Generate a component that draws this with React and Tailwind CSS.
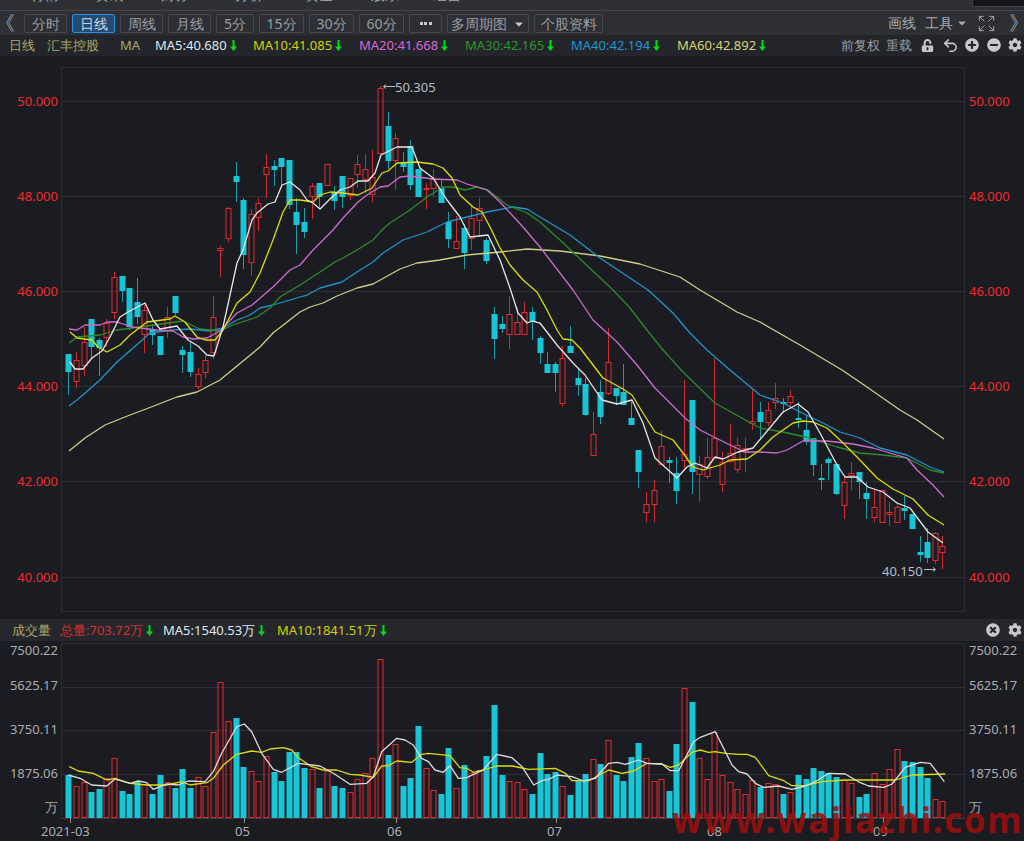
import React from "react";
import { Expand, Undo2 } from "lucide-react";
import { FaCog, FaUnlockAlt, FaPlusCircle, FaMinusCircle, FaTimesCircle, FaCaretDown } from "react-icons/fa";

// [highY, bodyTop, bodyBottom, lowY, isRed]
const C = [
[354,354,372,395,0],[352,360,381,388,1],[327,342,365,376,1],[319,319,347,358,0],[338,340,348,376,0],[319,323,337,347,1],
[272,277,312,319,1],[276,276,291,302,0],[288,288,327,330,0],[278,302,317,324,0],[305,310,334,353,1],[324,329,335,345,0],
[336,336,355,355,0],[307,317,330,338,1],[296,296,313,315,0],[346,350,355,373,0],[342,352,372,377,0],[368,374,386,389,1],
[355,360,372,378,1],[296,317,352,359,1],[246,248,250,277,1],[207,208,238,242,1],[162,176,182,202,0],[198,200,255,269,0],
[209,214,262,276,1],[198,203,217,231,1],[154,167,174,198,1],[160,166,170,186,0],[158,158,167,185,0],[160,160,205,209,0],
[198,212,225,254,0],[208,222,232,238,0],[183,186,196,219,1],[183,183,197,208,0],[164,164,185,185,1],[186,193,201,210,0],
[176,176,197,208,0],[178,178,195,200,1],[155,164,174,188,1],[154,169,179,193,1],[150,177,194,202,1],[86,88,153,153,1],
[112,126,161,169,0],[133,138,160,190,1],[152,162,167,172,0],[140,146,185,190,0],[169,169,197,197,0],[183,188,189,209,1],
[169,178,188,197,1],[179,188,203,203,0],[212,222,239,248,0],[216,241,248,248,1],[224,228,253,269,0],[206,218,238,250,1],
[198,208,220,237,1],[238,240,261,264,0],[307,314,339,359,0],[316,324,329,333,0],[296,314,334,349,1],[307,322,334,334,1],
[302,312,334,334,1],[307,312,322,340,0],[336,338,353,364,0],[352,364,373,373,0],[362,364,373,392,0],[346,358,403,407,1],
[326,346,353,353,0],[368,378,385,396,0],[378,384,415,416,0],[412,434,455,455,1],[380,392,417,424,0],[328,362,393,395,1],
[388,388,396,405,0],[364,392,405,405,0],[400,418,425,425,0],[450,450,472,488,0],[492,504,512,522,1],[480,490,504,522,1],
[431,446,464,464,1],[457,460,463,483,0],[457,473,491,504,0],[380,454,460,470,1],[400,400,472,494,0],[456,464,474,502,1],
[438,457,476,479,1],[358,438,458,458,1],[452,462,484,492,1],[424,453,461,463,1],[438,445,469,473,1],[438,448,452,472,1],
[388,421,423,430,1],[402,412,422,438,0],[402,410,422,426,1],[383,398,402,409,1],[398,402,404,413,0],[390,396,402,409,1],
[402,418,420,428,0],[415,430,441,445,0],[438,438,465,476,0],[464,478,480,490,0],[457,459,463,480,0],[464,464,494,495,0],
[477,482,505,519,1],[462,473,475,490,1],[472,472,482,499,0],[482,493,499,519,0],[488,507,517,522,1],[490,490,522,522,1],
[502,512,514,526,1],[503,507,522,522,1],[496,508,511,520,0],[514,514,529,529,0],[536,552,555,562,0],[528,542,558,563,0],
[532,533,560,564,1],[536,546,552,569,1],
];
const VT = [495,528,515,547,537,505,443,543,553,515,523,553,495,515,533,478,533,500,528,365,215,332,325,472,482,512,437,487,513,427,427,475,478,533,483,527,533,547,508,488,443,146,436,403,527,503,348,475,541,553,413,535,465,490,480,438,286,495,514,
515,538,553,430,492,485,528,556,513,492,447,462,391,495,513,440,400,443,512,508,543,403,233,276,443,508,365,495,515,538,553,510,530,520,523,553,547,495,508,475,482,490,500,510,520,560,553,488,523,478,417,452,455,472,505,567,573];

const MA5 = "70,362 75,369 83,369 92,358 102,351 110,337 120,317 128,312 145,303 153,320 160,329 177,326 188,340 198,346 207,355 214,356 223,327 237,263 243,250 252,220 257,213 268,204 275,202 282,185 290,182 300,190 307,200 313,203 320,209 330,199 340,190 350,187 358,181 368,181 375,173 381,155 397,147 412,147 420,168 433,178 447,200 460,217 470,237 488,235 500,260 510,288 518,313 527,323 533,321 540,323 557,345 573,363 585,375 602,400 617,404 632,400 643,423 655,458 677,478 687,467 695,463 707,468 715,457 723,459 738,452 753,448 768,430 783,412 798,404 808,412 820,433 837,465 845,477 857,477 868,487 883,492 897,503 910,508 928,532 943,543";
const MA10 = "70,332 77,338 92,340 98,347 107,352 120,345 130,335 147,322 170,319 175,316 185,322 197,337 205,340 215,340 223,330 237,303 250,292 260,273 273,240 283,212 290,200 300,200 313,202 320,195 330,192 343,193 358,195 372,188 382,173 388,171 397,163 417,162 433,164 443,168 452,178 460,195 473,207 482,212 490,227 500,248 510,265 523,280 537,292 547,310 557,330 563,339 572,340 580,348 603,378 623,389 632,395 643,413 655,432 673,440 683,453 693,467 703,470 720,465 730,460 747,459 760,450 773,437 793,423 803,421 813,422 827,428 840,440 858,458 877,478 893,489 913,499 928,515 944,525";
const MA20 = "69,329 77,330 85,325 100,325 107,322 117,322 132,327 157,330 173,331 183,337 193,339 207,338 220,331 237,313 252,305 273,287 290,270 300,265 313,250 333,230 343,218 358,202 367,195 380,187 388,186 400,177 410,176 433,179 457,180 467,184 487,190 500,202 523,227 540,247 573,290 593,320 617,342 637,365 655,388 670,403 685,418 700,430 730,445 745,452 760,452 777,453 787,450 803,441 827,441 853,444 873,448 890,453 907,458 917,470 933,485 944,497";
const MA30 = "69,343 77,337 100,335 117,330 147,326 183,321 200,329 220,331 233,325 257,317 270,308 280,297 300,285 320,272 335,262 343,258 357,250 373,240 382,230 390,223 410,210 427,197 443,187 453,187 465,190 477,187 488,190 507,205 527,213 540,222 560,240 613,290 630,308 647,330 663,350 683,372 715,403 740,417 760,428 783,432 810,438 837,447 860,453 883,455 907,458 930,470 944,473";
const MA40 = "69,406 77,400 100,380 117,362 140,342 150,333 173,330 190,329 210,331 223,328 237,320 250,315 260,308 273,305 290,300 300,297 307,295 320,288 342,282 357,272 373,262 383,253 403,240 427,232 447,222 467,217 487,212 513,207 527,209 540,217 570,235 600,258 648,290 673,313 690,333 707,350 730,370 760,395 783,403 800,412 823,423 840,432 860,438 880,448 907,455 930,467 944,472";
const MA60 = "69,451 85,438 105,425 130,415 146,409 177,397 197,392 220,380 260,347 273,333 300,312 310,307 323,303 337,296 357,288 373,284 400,269 417,263 440,260 467,255 500,252 527,249 560,251 600,256 640,264 680,277 700,290 737,312 760,322 800,345 842,370 867,387 900,410 917,420 944,439";

const VMA5A = [[205,495],[240,505],[275,525],[320,528],[345,507],[390,520],[415,513],[440,518],[460,538],[500,522],[535,525],[565,513],[615,515],[640,485],[665,430],[710,350],[733,342],[755,365],[785,430],[820,478],[845,487],[895,460],[960,468],[1000,490],[1050,523],[1100,520],[1120,500],[1145,425],[1190,385],[1215,390],[1240,405],[1265,445],[1285,455],[1305,480],[1330,487],[1350,467],[1375,505],[1400,503],[1450,480],[1490,433],[1536,443]];
const VMA5B = [[30,470],[65,525],[90,512],[110,508],[135,495],[180,500],[215,513],[250,505],[290,460],[315,457],[340,463],[380,450],[405,460],[450,462],[475,482],[500,482],[545,395],[565,382],[610,365],[660,465],[680,485],[705,492],[730,520],[755,532],[800,528],[840,538],[880,528],[910,515],[950,490],[1000,492],[1045,518],[1070,528],[1115,532],[1140,522],[1180,472],[1225,457],[1255,460],[1297,515]];
const VMA10A = [[208,470],[235,483],[280,490],[320,510],[345,505],[390,520],[440,525],[500,525],[545,515],[570,525],[620,518],[640,505],[670,465],[710,433],[755,423],[785,427],[810,417],[850,413],[875,420],[895,443],[935,470],[970,480],[1010,480],[1050,493],[1080,495],[1120,502],[1145,468],[1165,467],[1190,453],[1235,457],[1265,433],[1285,430],[1350,437],[1380,473],[1400,475],[1420,487],[1450,480],[1490,468],[1536,468]];
const VMA10B = [[50,478],[130,475],[160,490],[180,512],[230,512],[290,480],[330,490],[365,483],[405,460],[450,462],[475,472],[500,465],[540,427],[565,420],[590,427],[610,425],[640,430],[680,433],[705,433],[730,442],[770,497],[815,512],[840,527],[880,527],[930,515],[1000,510],[1100,510],[1150,510],[1200,495],[1300,492]];
const vp = (a, b) =>
  a.map(([u, v]) => `${(u / 3).toFixed(1)},${(610 + v / 3).toFixed(1)}`)
    .concat(b.map(([u, v]) => `${(512 + u / 3).toFixed(1)},${(610 + v / 3).toFixed(1)}`))
    .join(" ");

const RED = "#e42a30";
const CYAN = "#17c5d6";
const cx = (i) => 68.4 + 7.6 * i;
const cl = (x) => Math.round(x);

function Candles() {
  return C.map(([h, t, b, l, r], i) => {
    const x = cl(cx(i));
    return (
      <g key={i}>
        {h < t && <line x1={x + 0.5} x2={x + 0.5} y1={h} y2={t} stroke={r ? "#cf2a2f" : "#1b9cab"} />}
        {l > b && <line x1={x + 0.5} x2={x + 0.5} y1={b} y2={l} stroke={r ? "#cf2a2f" : "#1b9cab"} />}
        {r ? (
          <rect x={x - 2} y={t + 0.5} width={5} height={Math.max(b - t, 1)} fill="none" stroke={RED} />
        ) : (
          <rect x={x - 2.5} y={t} width={6} height={Math.max(b - t, 1)} fill={CYAN} />
        )}
      </g>
    );
  });
}

function Bars() {
  return VT.map((v, i) => {
    const x = cl(cx(i));
    const y = Math.round(610 + v / 3);
    return C[i][4] ? (
      <rect key={i} x={x - 2} y={y + 0.5} width={5} height={817 - y} fill="none" stroke={RED} />
    ) : (
      <rect key={i} x={x - 2.5} y={y} width={6} height={818 - y} fill={CYAN} />
    );
  });
}

const Line = ({ p, c, w = 1.3 }) => <polyline points={p} fill="none" stroke={c} strokeWidth={w} strokeLinejoin="round" />;

const Down = () => (
  <svg width="7" height="11" viewBox="0 0 7 11" className="shrink-0 ml-[3px]">
    <path d="M2.5 0h2v6.5h2.5L3.500 11 0 6.500h2.500z" fill="#00dc14" />
  </svg>
);

const Btn = ({ w, on, children }) => (
  <div
    className={
      w +
      " h-[19px] flex items-center justify-center rounded-[2px] border text-[14px] leading-none " +
      (on ? "border-[#2a8fe8] bg-[#244a72] text-[#c6d6e6]" : "border-[#47494e] text-[#9b9ea3]")
    }
  >
    {children}
  </div>
);

const lab = "absolute h-[18px] leading-[18px] text-[13px] whitespace-nowrap";

export default function App() {
  return (
    <div className="relative w-[1024px] h-[841px] overflow-hidden bg-[#1b1c21] [font-family:'Noto_Sans','Noto_Sans_CJK_SC',sans-serif]">
      {/* clipped top strip */}
      <div className="relative h-[10px] bg-[#2d2f34] overflow-hidden">
        <div className="absolute left-[31px] top-[-14px] flex text-[14px] leading-[18px] text-[#a5a8ad] whitespace-nowrap">
          <span className="w-[64px]">行情</span>
          <span className="w-[66px]">资讯</span>
          <span className="w-[74px]">财务</span>
          <span className="w-[70px]">分析</span>
          <span className="w-[66px]">资金</span>
          <span className="w-[62px]">股东</span>
          <span>经营</span>
        </div>
        <div className="absolute right-0 top-0 w-[52px] h-[7px] bg-[#141518] border-l border-b border-[#3d3f44]"></div>
      </div>
      <div className="h-[1px] bg-[#45474c]"></div>

      {/* toolbar */}
      <div className="relative h-[24px] bg-[#2d2f34] flex items-center gap-[5px] pl-[24px] pt-[1px]">
        <span className="absolute left-[-5px] top-[2px] text-[20px] leading-[20px] text-[#a5a8ad] [font-family:'Noto_Sans_CJK_SC',sans-serif]">《</span>
        <Btn w="w-[43px]">分时</Btn>
        <Btn w="w-[43px]" on>日线</Btn>
        <Btn w="w-[43px]">周线</Btn>
        <Btn w="w-[43px]">月线</Btn>
        <Btn w="w-[38px]">5分</Btn>
        <Btn w="w-[45px]">15分</Btn>
        <Btn w="w-[45px]">30分</Btn>
        <Btn w="w-[45px]">60分</Btn>
        <Btn w="w-[33px]">
          <span className="flex gap-[1.500px]">
            <i className="block w-[3px] h-[3px] bg-[#c6c8cc]"></i>
            <i className="block w-[3px] h-[3px] bg-[#c6c8cc]"></i>
            <i className="block w-[3px] h-[3px] bg-[#c6c8cc]"></i>
          </span>
        </Btn>
        <Btn w="w-[82px]">
          <span>多周期图</span>
          <FaCaretDown className="ml-[6px] text-[#c6c8cc]" size={12} />
        </Btn>
        <Btn w="w-[69px]">个股资料</Btn>
        <div className="absolute left-[888px] top-[3px] flex items-center text-[14px] leading-[18px] text-[#a5a8ad]">
          <span className="w-[37px]">画线</span>
          <span>工具</span>
          <FaCaretDown className="ml-[3px]" size={12} />
        </div>
        <Expand className="absolute left-[977px] top-[3px] text-[#a5a8ad]" size={19} strokeWidth={1.2} />
        <span className="absolute left-[1009px] top-[2px] text-[20px] leading-[20px] text-[#a5a8ad] [font-family:'Noto_Sans_CJK_SC',sans-serif]">》</span>
      </div>

      {/* info row */}
      <div className="relative h-[21px] bg-[#23252a] text-[13px] leading-[21px]">
        <span className="absolute left-[9px] text-[#a8aa6c]">日线</span>
        <span className="absolute left-[47px] text-[#a8aa6c]">汇丰控股</span>
        <span className="absolute left-[120px] text-[#a8aa6c]">MA</span>
        <span className="absolute left-[155px] flex items-center text-[#dfe7ef]">MA5:40.680<Down /></span>
        <span className="absolute left-[253px] flex items-center text-[#d2d200]">MA10:41.085<Down /></span>
        <span className="absolute left-[359px] flex items-center text-[#d866d8]">MA20:41.668<Down /></span>
        <span className="absolute left-[465px] flex items-center text-[#2e962e]">MA30:42.165<Down /></span>
        <span className="absolute left-[571px] flex items-center text-[#1a97d4]">MA40:42.194<Down /></span>
        <span className="absolute left-[677px] flex items-center text-[#d8d474]">MA60:42.892<Down /></span>
        <span className="absolute left-[841px] text-[#9b9ea3]">前复权</span>
        <span className="absolute left-[886px] text-[#9b9ea3]">重载</span>
        <FaUnlockAlt className="absolute left-[921px] top-[4px] text-[#c6c8cc]" size={13} />
        <Undo2 className="absolute left-[942px] top-[2px] text-[#c6c8cc]" size={17} strokeWidth={2.2} />
        <FaPlusCircle className="absolute left-[965px] top-[3px] text-[#c6c8cc]" size={14} />
        <FaMinusCircle className="absolute left-[987px] top-[3px] text-[#c6c8cc]" size={14} />
        <FaCog className="absolute left-[1008px] top-[3px] text-[#c6c8cc]" size={14} />
      </div>

      {/* price chart */}
      <div className="relative h-[563px] bg-[#1b1c21]">
        <svg className="absolute left-0 top-0" width="1024" height="563" viewBox="0 56 1024 563">
          <path d="M61.500 612V67.500H964.500V612M61 611.500H965" fill="none" stroke="#2c2d32" />
          <path d="M62 101.500H964M62 196.500H964M62 291.500H964M62 386.500H964M62 481.500H964M62 577.500H964" stroke="#2e2f34" strokeWidth="1" />
          <Candles />
          <Line p={MA60} c="#cfcf82" />
          <Line p={MA40} c="#1f93cc" />
          <Line p={MA30} c="#2d8a2d" />
          <Line p={MA20} c="#cd6ccd" />
          <Line p={MA10} c="#dede00" />
          <Line p={MA5} c="#e6e6e6" />
          <path d="M395 86.500H383.500M386 84.500L383.500 86.500L386 88.500" fill="none" stroke="#b9bcc1" />
          <path d="M924 569.500H935.500M933 567.500L935.500 569.500L933 571.500" fill="none" stroke="#b9bcc1" />
        </svg>
        <span className={lab + " left-[395px] top-[22px] text-[#b9bcc1] text-[13.500px]"}>50.305</span>
        <span className={lab + " left-[882px] top-[506px] text-[#b9bcc1] text-[13.500px]"}>40.150</span>

        <span className={lab + " left-0 w-[58px] text-right top-[36px] text-[#ef2b2e]"}>50.000</span>
        <span className={lab + " left-0 w-[58px] text-right top-[131px] text-[#ef2b2e]"}>48.000</span>
        <span className={lab + " left-0 w-[58px] text-right top-[226px] text-[#ef2b2e]"}>46.000</span>
        <span className={lab + " left-0 w-[58px] text-right top-[321px] text-[#ef2b2e]"}>44.000</span>
        <span className={lab + " left-0 w-[58px] text-right top-[416px] text-[#ef2b2e]"}>42.000</span>
        <span className={lab + " left-0 w-[58px] text-right top-[512px] text-[#ef2b2e]"}>40.000</span>

        <span className={lab + " left-[969px] top-[36px] text-[#ef2b2e]"}>50.000</span>
        <span className={lab + " left-[969px] top-[131px] text-[#ef2b2e]"}>48.000</span>
        <span className={lab + " left-[969px] top-[226px] text-[#ef2b2e]"}>46.000</span>
        <span className={lab + " left-[969px] top-[321px] text-[#ef2b2e]"}>44.000</span>
        <span className={lab + " left-[969px] top-[416px] text-[#ef2b2e]"}>42.000</span>
        <span className={lab + " left-[969px] top-[512px] text-[#ef2b2e]"}>40.000</span>
      </div>

      {/* volume header */}
      <div className="relative h-[22px] bg-[#25272c] text-[13px] leading-[22px]">
        <span className="absolute left-[12px] text-[#a8aa6c]">成交量</span>
        <span className="absolute left-[60px] flex items-center text-[#d8302f]">总量:703.72万<Down /></span>
        <span className="absolute left-[163px] flex items-center text-[#dfe7ef]">MA5:1540.53万<Down /></span>
        <span className="absolute left-[277px] flex items-center text-[#d2d200]">MA10:1841.51万<Down /></span>
        <FaTimesCircle className="absolute left-[986px] top-[4px] text-[#c6c8cc]" size={14} />
        <FaCog className="absolute left-[1008px] top-[4px] text-[#c6c8cc]" size={14} />
      </div>

      {/* volume chart */}
      <div className="relative h-[200px] bg-[#1b1c21]">
        <svg className="absolute left-0 top-0" width="1024" height="200" viewBox="0 641 1024 200">
          <path d="M61.500 818V643.500H964.500V818" fill="none" stroke="#2c2d32" />
          <path d="M62 687.500H964M62 730.500H964M62 774.500H964" stroke="#2e2f34" />
          <path d="M61 818.500H965" stroke="#3a3b40" />
          <path d="M70.500 818V823M244.500 818V823M396.500 818V823M556.500 818V823M716.500 818V823M883.500 818V823" stroke="#8e9196" />
          <Bars />
          <Line p={vp(VMA10A, VMA10B)} c="#dede00" />
          <Line p={vp(VMA5A, VMA5B)} c="#dcdcdc" />
        </svg>

        <span className={lab + " left-0 w-[58px] text-right top-[0px] text-[#a9acb1]"}>7500.22</span>
        <span className={lab + " left-0 w-[58px] text-right top-[35px] text-[#a9acb1]"}>5625.17</span>
        <span className={lab + " left-0 w-[58px] text-right top-[79px] text-[#a9acb1]"}>3750.11</span>
        <span className={lab + " left-0 w-[58px] text-right top-[123px] text-[#a9acb1]"}>1875.06</span>
        <span className={lab + " left-0 w-[58px] text-right top-[157px] text-[#a9acb1]"}>万</span>

        <span className={lab + " left-[969px] top-[0px] text-[#a9acb1]"}>7500.22</span>
        <span className={lab + " left-[969px] top-[35px] text-[#a9acb1]"}>5625.17</span>
        <span className={lab + " left-[969px] top-[79px] text-[#a9acb1]"}>3750.11</span>
        <span className={lab + " left-[969px] top-[123px] text-[#a9acb1]"}>1875.06</span>
        <span className={lab + " left-[969px] top-[157px] text-[#a9acb1]"}>万</span>

        <span className={lab + " left-[41px] top-[181px] text-[#a9acb1]"}>2021-03</span>
        <span className={lab + " left-[235px] top-[181px] text-[#a9acb1]"}>05</span>
        <span className={lab + " left-[387px] top-[181px] text-[#a9acb1]"}>06</span>
        <span className={lab + " left-[547px] top-[181px] text-[#a9acb1]"}>07</span>
        <span className={lab + " left-[707px] top-[181px] text-[#a9acb1]"}>08</span>
        <span className={lab + " left-[873px] top-[181px] text-[#a9acb1]"}>09</span>
      </div>

      {/* watermark */}
      <div className="absolute left-[672px] top-[800px] text-[35px] leading-[40px] font-bold tracking-[1.600px] text-[#a00e0e]/85 whitespace-nowrap [font-family:'DejaVu_Sans',sans-serif]">
        www.wajiazhi.com
      </div>
    </div>
  );
}
